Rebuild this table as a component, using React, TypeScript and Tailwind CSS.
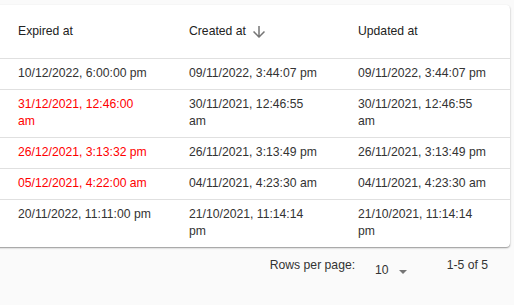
import React from "react";

type Row = { exp: string[]; red: boolean; created: string[]; updated: string[] };

const rows: Row[] = [
  { exp: ["10/12/2022, 6:00:00 pm"], red: false, created: ["09/11/2022, 3:44:07 pm"], updated: ["09/11/2022, 3:44:07 pm"] },
  { exp: ["31/12/2021, 12:46:00", "am"], red: true, created: ["30/11/2021, 12:46:55", "am"], updated: ["30/11/2021, 12:46:55", "am"] },
  { exp: ["26/12/2021, 3:13:32 pm"], red: true, created: ["26/11/2021, 3:13:49 pm"], updated: ["26/11/2021, 3:13:49 pm"] },
  { exp: ["05/12/2021, 4:22:00 am"], red: true, created: ["04/11/2021, 4:23:30 am"], updated: ["04/11/2021, 4:23:30 am"] },
  { exp: ["20/11/2022, 11:11:00 pm"], red: false, created: ["21/10/2021, 11:14:14", "pm"], updated: ["21/10/2021, 11:14:14", "pm"] },
];

function Lines({ lines }: { lines: string[] }) {
  return (
    <>
      {lines.map((l, i) => (
        <div key={i} className="whitespace-nowrap">
          {l}
        </div>
      ))}
    </>
  );
}

export default function App() {
  return (
    <div
      className="w-[514px] h-[305px] bg-[#fafafa] overflow-hidden text-[12.2px] leading-[17px] text-[#333]"
      style={{ fontFamily: '"Liberation Sans", Arial, sans-serif' }}
    >
      <div className="pt-[5px]">
        <div className="-ml-[6px] w-[516px] bg-white rounded-r-[4px] shadow-[0_1px_2px_rgba(0,0,0,0.3),0_1px_1px_rgba(0,0,0,0.14)]">
          <div className="grid grid-cols-[179px_169px_1fr] h-[54px] items-center border-b border-[#e0e0e0] text-[#222]">
            <div className="pl-[24px]">Expired at</div>
            <div className="pl-[16px] flex items-center">
              <span>Created at</span>
              <svg width="18" height="18" viewBox="0 0 24 24" className="ml-[4px]" fill="#757575">
                <path d="M20 12l-1.41-1.41L13 16.17V4h-2v12.17l-5.58-5.59L4 12l8 8 8-8z" />
              </svg>
            </div>
            <div className="pl-[16px]">Updated at</div>
          </div>
          {rows.map((r, i) => (
            <div
              key={i}
              className={`grid grid-cols-[179px_169px_1fr] pt-[6px] pb-[7px] ${
                i < rows.length - 1 ? "border-b border-[#e0e0e0]" : ""
              }`}
            >
              <div className={`pl-[24px] ${r.red ? "text-[#ff0000]" : ""}`}>
                <Lines lines={r.exp} />
              </div>
              <div className="pl-[16px]">
                <Lines lines={r.created} />
              </div>
              <div className="pl-[16px]">
                <Lines lines={r.updated} />
              </div>
            </div>
          ))}
        </div>
      </div>
      <div className="flex justify-end items-start pt-[10px] pr-[26px] text-[#333]">
        <span>Rows per page:</span>
        <span className="ml-[20px] mt-[5px]">10</span>
        <svg width="8" height="4" viewBox="0 0 8 4" className="ml-[10px] mt-[13px]" fill="#757575">
          <path d="M0 0h8L4 4z" />
        </svg>
        <span className="ml-[40px]">1-5 of 5</span>
      </div>
    </div>
  );
}
